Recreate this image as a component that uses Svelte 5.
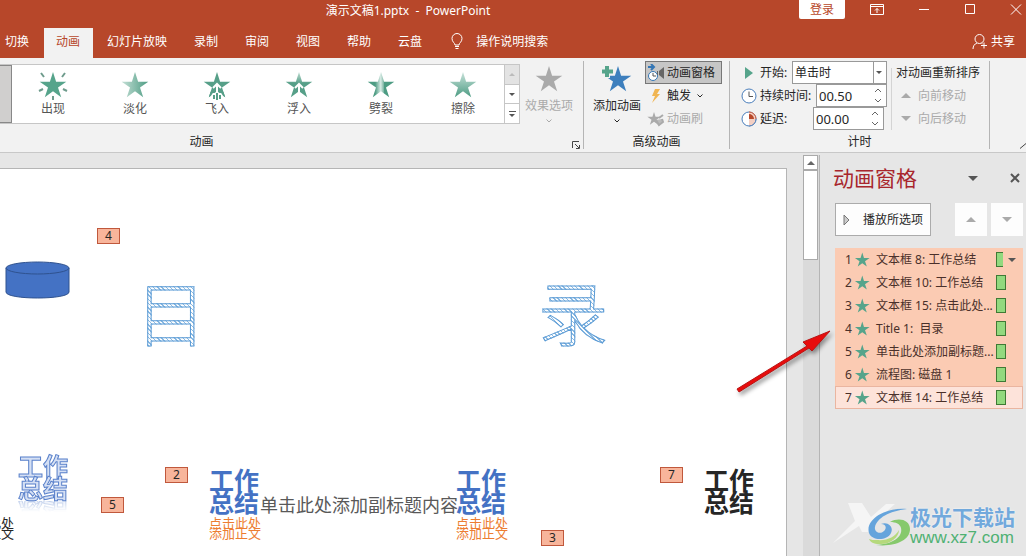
<script lang="ts">
	const star =
		"0,-14 3.1,-4.3 13.3,-4.3 5,1.6 8.2,11.3 0,5.3 -8.2,11.3 -5,1.6 -13.3,-4.3 -3.1,-4.3";

	const tabs = ["切换", "动画", "幻灯片放映", "录制", "审阅", "视图", "帮助", "云盘"];
	let activeTab = "动画";

	const effects = [
		{ id: "appear", name: "出现" },
		{ id: "fade", name: "淡化" },
		{ id: "fly", name: "飞入" },
		{ id: "float", name: "浮入" },
		{ id: "split", name: "劈裂" },
		{ id: "wipe", name: "擦除" },
	];

	const animations = [
		"文本框 8: 工作总结",
		"文本框 10: 工作总结",
		"文本框 15: 点击此处...",
		"Title 1:  目录",
		"单击此处添加副标题...",
		"流程图: 磁盘 1",
		"文本框 14: 工作总结",
	];
	let selected = 6;

	const markers = [
		{ n: 4, x: 97, y: 59 },
		{ n: 2, x: 165, y: 298 },
		{ n: 5, x: 101, y: 328 },
		{ n: 7, x: 660, y: 298 },
		{ n: 3, x: 541, y: 361 },
	];

	let start = "单击时";
	let duration = "00.50";
	let delay = "00.00";
	let showPane = true;

	function step(value: string, by: number) {
		return Math.max(0, Number(value) + by).toFixed(2).padStart(5, "0");
	}
</script>

<div class="window">
	<header>
		<div class="titlebar">
			<h1>演示文稿1.pptx&nbsp; -&nbsp; PowerPoint</h1>
			<button class="login">登录</button>
			<div class="controls">
				<button aria-label="功能区显示选项">
					<svg width="14" height="11" viewBox="0 0 14 11"><path d="M.5.5h13v10H.5zM.5 2.5h13M7 9V4.500M5 6.500l2-2 2 2" /></svg>
				</button>
				<button aria-label="最小化">
					<svg width="12" height="11" viewBox="0 0 12 11"><path d="M1 5.500h10" /></svg>
				</button>
				<button aria-label="最大化">
					<svg width="12" height="11" viewBox="0 0 12 11"><path d="M1.500.5h9v9h-9z" /></svg>
				</button>
				<button aria-label="关闭">
					<svg width="12" height="11" viewBox="0 0 12 11"><path d="M1 .5l10 10M11 .5l-10 10" /></svg>
				</button>
			</div>
		</div>
		<nav>
			{#each tabs as tab}
				<button class="tab" class:active={tab === activeTab} on:click={() => (activeTab = tab)}>{tab}</button>
			{/each}
			<button class="tell">
				<svg width="12" height="17" viewBox="0 0 12 17"><path d="M4 12c0-2-3-3-3-6.500a5 5 0 0 1 10 0C11 9 8 10 8 12zM4 13.500h4M4.500 15.500h3" /></svg>
				操作说明搜索
			</button>
			<button class="share">
				<svg width="16" height="17" viewBox="0 0 16 17"><circle cx="7.500" cy="6" r="4.500" /><path d="M1 16c0-3 1.500-5 4-6M9.500 10l1 .8M12 9.500v6M9 12.500h6" /></svg>
				共享
			</button>
		</nav>
	</header>

	<section class="ribbon">
		<div class="group animation">
			<div class="body">
				<div class="gallery">
					<div class="none"></div>
					{#each effects as effect}
						<button class="effect">
							<svg width="32" height="32" viewBox="-16 -16 32 32">
								<defs>
									<linearGradient id="g-appear"><stop stop-color="#56a48b" /></linearGradient>
									<linearGradient id="g-fade"><stop offset=".1" stop-color="#b8d8cd" /><stop offset="1" stop-color="#4d9c83" /></linearGradient>
									<linearGradient id="g-fly"><stop stop-color="#569f88" /></linearGradient>
									<linearGradient id="g-float" x2="0" y2="1"><stop stop-color="#c0ddd3" /><stop offset=".45" stop-color="#569f88" /></linearGradient>
									<linearGradient id="g-split"><stop offset=".28" stop-color="#4d9c83" /><stop offset=".49" stop-color="#d8ebe5" /><stop offset=".6" stop-color="#7eb7a5" /><stop offset=".62" stop-color="#4d9c83" /></linearGradient>
									<linearGradient id="g-wipe" x2="0" y2="1"><stop stop-color="#c8e2da" /><stop offset="1" stop-color="#4d9c83" /></linearGradient>
								</defs>
								<polygon points={star} fill="url(#g-{effect.id})" />
								{#if effect.id === "appear"}
									<path d="M-12-13l3 4M12-13l-3 4M-14 5l4-2M14 5l-4-2M0 10v4" stroke="#6e9b8c" stroke-width="2" />
								{:else if effect.id === "fly"}
									<path d="M0 8V-2M-4 2l4-4 4 4" stroke="#fff" stroke-width="2" fill="none" />
									<path d="M-6 7h12v8H-6z" fill="#fff" />
									<path d="M0 7v7M-3 9v4M3 9v4" stroke="#569f88" stroke-width="2" />
									<path d="M-8.200 11.300L-6.500 6l3-2v2L-6 9.800zM8.200 11.300L6.500 6l-3-2v2L6 9.800z" fill="#569f88" />
								{:else if effect.id === "float"}
									<path d="M0 6V-2M-4 2l4-4 4 4" stroke="#fff" stroke-width="2" fill="none" />
								{/if}
							</svg>
							{effect.name}
						</button>
					{/each}
					<div class="scroll">
						<button disabled aria-label="上一行"><i class="up"></i></button>
						<button aria-label="下一行"><i class="down"></i></button>
						<button aria-label="其他" class="more"><i class="down"></i></button>
					</div>
				</div>
				<button class="big" disabled>
					<svg width="32" height="34" viewBox="-16 -17 32 34"><polygon points={star} fill="#aaa" /></svg>
					效果选项
					<svg class="chev" width="6" height="4" viewBox="0 0 6 4"><path d="M.5.5L3 3 5.500.5" /></svg>
				</button>
			</div>
			<footer>动画</footer>
			<button class="launcher" aria-label="显示其他效果选项">
				<svg width="8" height="8" viewBox="0 0 8 8"><path d="M.5 7V.5H7M3 3l4 4M7.500 4v3.500H4" /></svg>
			</button>
		</div>

		<div class="group advanced">
			<div class="body">
				<button class="big">
					<svg width="34" height="34" viewBox="-18 -17 34 34">
						<polygon points={star} fill="#3d7fbd" />
						<path d="M-11-15v13M-17-8.500h13" stroke="#f2f2f2" stroke-width="6" />
						<path d="M-11-14v11M-16-8.500h11" stroke="#56a48b" stroke-width="4" />
					</svg>
					添加动画
					<svg class="chev" width="6" height="4" viewBox="0 0 6 4"><path d="M.5.5L3 3 5.500.5" /></svg>
				</button>
				<div class="stack">
					<button class="row" class:pressed={showPane} on:click={() => (showPane = !showPane)}>
						<svg width="18" height="18" viewBox="0 0 18 18">
							<path d="M1 3h6M4 0l3 3-3 3" fill="none" stroke="#3476b5" stroke-width="2" />
							<circle cx="6" cy="12" r="4.500" fill="#fff" stroke="#3476b5" />
							<path d="M6 9v3h3" fill="none" stroke="#555" />
							<path d="M17 3v12l-5-4V7zM10 7h1v4h-1z" fill="#666" />
						</svg>
						动画窗格
					</button>
					<button class="row">
						<svg width="18" height="18" viewBox="0 0 18 18"><path d="M8 2h5l-3 5h3l-8 9 3-7H5z" fill="#f0b552" /></svg>
						触发
						<svg class="chev" width="6" height="4" viewBox="0 0 6 4"><path d="M.5.5L3 3 5.500.5" /></svg>
					</button>
					<button class="row" disabled>
						<svg width="18" height="18" viewBox="0 0 18 18">
							<g transform="translate(7 9) scale(.5)"><polygon points={star} fill="#aaa" /></g>
							<path d="M9 10l3 5 4-3-1-3M12 8l4-3" fill="#bbb" stroke="#aaa" stroke-width="2" />
						</svg>
						动画刷
					</button>
				</div>
			</div>
			<footer>高级动画</footer>
		</div>

		<div class="group timing">
			<div class="body">
				<div class="fields">
					<div class="field">
						<svg width="16" height="16" viewBox="0 0 16 16"><path d="M4 2l8 6-8 6z" fill="#56a48b" /></svg>
						<label for="start">开始:</label>
						<div class="select">
							<select id="start" bind:value={start}>
								<option>单击时</option>
								<option>与上一动画同时</option>
								<option>上一动画之后</option>
							</select>
							<i class="down"></i>
						</div>
					</div>
					<div class="field">
						<svg width="16" height="16" viewBox="0 0 16 16"><circle cx="8" cy="8" r="7" fill="#fff" stroke="#4a7ebb" /><path d="M8 3.500V8.500h4" fill="none" stroke="#555" /></svg>
						<label for="duration">持续时间:</label>
						<div class="spin">
							<input id="duration" bind:value={duration} />
							<div>
								<button aria-label="增加持续时间" on:click={() => (duration = step(duration, 0.25))}><svg width="8" height="5" viewBox="0 0 8 5"><path d="M1 4l3-3 3 3" /></svg></button>
								<button aria-label="减少持续时间" on:click={() => (duration = step(duration, -0.25))}><svg width="8" height="5" viewBox="0 0 8 5"><path d="M1 1l3 3 3-3" /></svg></button>
							</div>
						</div>
					</div>
					<div class="field">
						<svg width="16" height="16" viewBox="0 0 16 16"><circle cx="8" cy="8" r="7" fill="#fff" stroke="#4a7ebb" /><path d="M8 8V1a7 7 0 0 1 0 14" fill="#f3cfc3" /><path d="M8 3v5h5a5 5 0 0 0-5-5z" fill="#b7472a" /><path d="M8 1a7 7 0 0 1 7 7" fill="none" stroke="#c9573a" /><path d="M15 8a7 7 0 0 1-7 7" fill="none" stroke="#4a7ebb" /></svg>
						<label for="delay">延迟:</label>
						<div class="spin delay">
							<input id="delay" bind:value={delay} />
							<div>
								<button aria-label="增加延迟" on:click={() => (delay = step(delay, 0.25))}><svg width="8" height="5" viewBox="0 0 8 5"><path d="M1 4l3-3 3 3" /></svg></button>
								<button aria-label="减少延迟" on:click={() => (delay = step(delay, -0.25))}><svg width="8" height="5" viewBox="0 0 8 5"><path d="M1 1l3 3 3-3" /></svg></button>
							</div>
						</div>
					</div>
				</div>
				<div class="reorder">
					<span>对动画重新排序</span>
					<button disabled><i class="up"></i>向前移动</button>
					<button disabled><i class="down"></i>向后移动</button>
				</div>
			</div>
			<footer>计时</footer>
		</div>
		<button class="collapse" aria-label="折叠功能区">
			<svg width="7" height="6" viewBox="0 0 7 6"><path d="M1 5.500l6-5" /></svg>
		</button>
	</section>

	<main>
		<div class="slide">
			<svg class="disk" width="65" height="39" viewBox="0 0 65 39">
				<path d="M1 7v24c0 8 63 8 63 0V7" fill="#4472c4" stroke="#2f528f" />
				<ellipse cx="32.500" cy="7" rx="31.500" ry="6" fill="#4472c4" stroke="#2f528f" />
			</svg>
			<span class="hatched mu">目</span>
			<span class="hatched lu">录</span>
			{#each markers as m}
				<span class="marker" style="left: {m.x}px; top: {m.y}px">{m.n}</span>
			{/each}
			<p class="word outline">工作<br />总结</p>
			<p class="word blue first">工作<br />总结</p>
			<p class="word blue second">工作<br />总结</p>
			<p class="word black">工作<br />总结</p>
			<p class="subtitle">单击此处添加副标题内容</p>
			<p class="caption dark">点击此处<br />添加正文</p>
			<p class="caption first">点击此处<br />添加正文</p>
			<p class="caption second">点击此处<br />添加正文</p>
		</div>
		<div class="scrollbar">
			<button aria-label="向上滚动"><i class="up"></i></button>
			<div class="thumb"></div>
		</div>

		{#if showPane}
			<aside>
				<div class="head">
					<h2>动画窗格</h2>
					<button aria-label="任务窗格选项"><i class="down"></i></button>
					<button aria-label="关闭窗格" on:click={() => (showPane = false)}>
						<svg width="10" height="10" viewBox="0 0 10 10"><path d="M1 1l8 8M9 1L1 9" /></svg>
					</button>
				</div>
				<div class="tools">
					<button class="play">
						<svg width="8" height="12" viewBox="0 0 8 12"><path d="M1 1l5 5-5 5z" /></svg>
						播放所选项
					</button>
					<button class="move" disabled aria-label="上移"><i class="up"></i></button>
					<button class="move" disabled aria-label="下移"><i class="down"></i></button>
				</div>
				<ol>
					{#each animations as name, i}
						<li class:selected={i === selected}>
							<button on:click={() => (selected = i)}>
								<span class="num">{i + 1}</span>
								<svg width="16" height="16" viewBox="-15 -15 29 29"><polygon points={star} fill="#56a48b" /></svg>
								<span class="name">{name}</span>
								<span class="bar" class:half={i === 0}></span>
								{#if i === 0}<i class="down"></i>{/if}
							</button>
						</li>
					{/each}
				</ol>
			</aside>
		{/if}

		<svg class="arrow" width="110" height="80" viewBox="0 0 110 80">
			<path d="M9 64L79 21 75 17 102 6 84 26 81 23 11 67z" fill="#e80c0c" stroke="#b81414" />
		</svg>

		<div class="watermark">
			<svg width="84" height="50" viewBox="0 0 84 50">
				<path d="M17 1h14l9 14L55 2h9L43 21l-3 9h-9l-3-6L2 41l22-22z" fill="#f5f5f5" />
				<path d="M76 7C54 5 34 18 38 31c3 8 18 8 22 0 3-6-3-12-10-9 5 0 6 4 3 7-4 4-10 1-9-4 2-9 14-16 32-18z" fill="#65a4dc" />
				<path d="M59 20c9-5 20-2 20 7 0 12-16 18-34 16 17-1 27-8 25-17-1-4-5-6-11-6z" fill="#86c96c" />
				<path d="M46 38c10 1 18-3 22-10 0 8-10 15-20 14-5 0-9-2-10-5 2 1 5 1 8 1z" fill="#b5d97c" />
			</svg>
			<div>
				<strong>极光下载站</strong>
				<span>www.xz7.com</span>
			</div>
		</div>
	</main>
</div>

<style>
	:global(body) {
		background: #e6e6e6;
	}

	.window {
		display: flex;
		flex-direction: column;
		min-height: 100vh;
		overflow: hidden;
		font: 12px/18px "Noto Sans", "Noto Sans CJK SC", sans-serif;
		color: #262626;
	}

	.window * {
		box-sizing: border-box;
	}

	button,
	input,
	select {
		font: inherit;
		color: inherit;
		border: 0;
		padding: 0;
		margin: 0;
		background: none;
		border-radius: 0;
		white-space: nowrap;
	}

	h1,
	h2,
	p,
	ol {
		margin: 0;
		padding: 0;
		font-weight: normal;
	}

	svg {
		display: block;
		flex: none;
	}

	.up,
	.down {
		width: 0;
		height: 0;
		border: 4px solid transparent;
		border-top: 0;
		border-bottom: 4px solid #666;
	}

	.down {
		border-top: 4px solid #555;
		border-bottom: 0;
	}

	.chev path {
		fill: none;
		stroke: currentColor;
	}

	header {
		background: #b7472a;
		color: #fff;
	}

	header svg {
		fill: none;
		stroke: #fff;
	}

	.titlebar {
		display: flex;
		height: 28px;
	}

	h1 {
		flex: 1;
		font-size: 12px;
		line-height: 22px;
		text-align: center;
		padding-left: 17px;
	}

	.login {
		width: 46px;
		height: 19px;
		background: #fff;
		color: #b7472a;
		border-radius: 0 0 2px 2px;
	}

	.controls {
		display: flex;
		width: 181px;
		height: 18px;
		justify-content: space-between;
		padding: 0 4px 0 25px;
	}

	nav {
		display: flex;
		height: 30px;
	}

	.tab {
		padding: 0 13px 3px 14px;
	}

	.tab:first-child {
		padding: 0 15px 3px 5px;
	}

	.tab.active {
		background: #f2f2f2;
		color: #b7472a;
		padding: 0 13px 3px 12px;
	}

	.tell,
	.share {
		display: flex;
		align-items: center;
		gap: 13px;
		padding: 0 0 3px 16px;
	}

	.share {
		margin-left: auto;
		gap: 3px;
		padding-right: 11px;
	}

	.ribbon {
		display: flex;
		height: 95px;
		background: #f2f2f2;
		border-bottom: 1px solid #c8c8c8;
		padding: 3px 0;
	}

	.group {
		position: relative;
		display: flex;
		flex-direction: column;
		justify-content: space-between;
		border-right: 1px solid #b5b5b5;
	}

	.group .body {
		display: flex;
	}

	footer {
		text-align: center;
		line-height: 14px;
	}

	.animation {
		width: 584px;
	}

	.animation footer {
		padding-right: 180px;
	}

	.gallery {
		display: flex;
		height: 60px;
		margin-top: 3px;
		background: #fff;
		border: 1px solid #c6c6c6;
		border-left: 0;
	}

	.none {
		width: 12px;
		background: #d0cfce;
		border: 1px solid #888;
		border-left: 0;
	}

	.effect {
		display: flex;
		flex-direction: column;
		align-items: center;
		width: 82px;
		padding-top: 5px;
		line-height: 14px;
		color: #555;
	}

	.scroll {
		display: flex;
		flex-direction: column;
		width: 15px;
		border-left: 1px solid #c6c6c6;
	}

	.scroll button {
		display: flex;
		flex: 1;
		align-items: center;
		justify-content: center;
		border-bottom: 1px solid #c6c6c6;
	}

	.scroll button:disabled {
		background: #e3e3e3;
	}

	.scroll button:last-child {
		border-bottom: 0;
	}

	.scroll i {
		border-left-width: 3px;
		border-right-width: 3px;
		border-top-width: 3px;
	}

	.scroll .up {
		border-top-width: 0;
		border-bottom-width: 3px;
		border-bottom-color: #bbb;
	}

	.scroll .more {
		flex-direction: column;
		gap: 2px;
	}

	.more::before {
		content: "";
		width: 7px;
		height: 1px;
		background: #555;
	}

	.big {
		display: flex;
		flex-direction: column;
		align-items: center;
		width: 58px;
		padding-top: 2px;
	}

	.big .chev {
		margin-top: 4px;
	}

	button:disabled {
		color: #aaa;
	}

	.launcher {
		position: absolute;
		right: 3px;
		bottom: 0;
	}

	.launcher path,
	.collapse path {
		fill: none;
		stroke: #444;
	}

	.advanced {
		width: 146px;
	}

	.advanced .big {
		width: 61px;
		padding-left: 5px;
	}

	.stack {
		display: flex;
		flex-direction: column;
		align-items: flex-start;
	}

	.row {
		display: flex;
		align-items: center;
		gap: 2px;
		width: 77px;
		height: 23px;
		border: 1px solid transparent;
		padding-left: 1px;
	}

	.row .chev {
		margin-left: 4px;
	}

	.pressed {
		background: #c6c6c6;
		border-color: #777;
	}

	.timing {
		width: 260px;
	}

	.timing .body {
		padding-left: 11px;
	}

	.fields {
		width: 150px;
	}

	.field {
		display: flex;
		align-items: center;
		height: 23px;
	}

	.field label {
		margin-left: 3px;
		white-space: nowrap;
	}

	.select,
	.spin {
		display: flex;
		align-items: center;
		height: 23px;
		width: 95px;
		margin-left: auto;
		margin-right: 4px;
		background: #fff;
		border: 1px solid #999;
	}

	.select {
		position: relative;
	}

	select {
		width: 100%;
		height: 100%;
		appearance: none;
		padding-left: 2px;
	}

	.select i {
		position: absolute;
		right: 0;
		border-width: 3px 3px 0;
		margin-right: 4px;
		pointer-events: none;
	}

	.select::after {
		content: "";
		position: absolute;
		right: 12px;
		height: 100%;
		border-left: 1px solid #999;
	}

	.spin {
		width: 71px;
	}

	.spin.delay {
		margin-right: 7px;
	}

	.spin input {
		flex: 1;
		min-width: 0;
		padding-left: 2px;
		font-size: 13px;
	}

	.spin div {
		display: flex;
		flex-direction: column;
		gap: 5px;
		padding-right: 4px;
	}

	.spin path {
		fill: none;
		stroke: #666;
	}

	.reorder {
		flex: 1;
		display: flex;
		flex-direction: column;
		margin-top: 7px;
		border-left: 1px solid #d4d4d4;
		padding-left: 4px;
		white-space: nowrap;
	}

	.reorder span {
		line-height: 10px;
		padding-bottom: 6px;
	}

	.reorder button {
		display: flex;
		align-items: center;
		gap: 7px;
		height: 23px;
		padding-left: 5px;
	}

	.reorder i {
		border-width: 0 5px 5px;
		border-bottom-color: #aaa;
	}

	.reorder i.down {
		border-width: 5px 5px 0;
		border-top-color: #aaa;
	}

	.collapse {
		align-self: flex-end;
		margin-left: auto;
	}

	main {
		position: relative;
		display: flex;
		flex: 1;
		min-height: 403px;
	}

	.slide {
		position: relative;
		flex: 1;
		margin: 15px 16px 0 0;
		overflow: hidden;
		background: #fff;
		border: 1px solid #b5b5b5;
		border-width: 1px 1px 0 0;
	}

	.slide > * {
		position: absolute;
		white-space: nowrap;
	}

	.disk {
		left: 5px;
		top: 92px;
	}

	.hatched {
		font: 300 70px/72px "Noto Sans CJK SC", sans-serif;
		color: transparent;
		background: repeating-linear-gradient(45deg, #8bbae2 0 1px, #fff 1px 3px);
		background-clip: text;
		-webkit-text-stroke: 1px #5b9bd5;
	}

	.mu {
		left: 136px;
		top: 106px;
	}

	.lu {
		left: 538px;
		top: 106px;
	}

	.marker {
		width: 23px;
		height: 16px;
		background: #f8b59b;
		border: 1px solid #c0583c;
		line-height: 14px;
		text-align: center;
	}

	.word {
		top: 300px;
		font-size: 25px;
		line-height: 22px;
		font-weight: bold;
	}

	.outline {
		left: 18px;
		top: 286px;
		color: #d5e0f4;
		-webkit-text-stroke: 1px #5b82cb;
		-webkit-box-reflect: below 2px linear-gradient(transparent 75%, rgba(0, 0, 0, 0.4));
	}

	.blue {
		color: #4472c4;
	}

	.black {
		left: 704px;
	}

	.first {
		left: 209px;
	}

	.second {
		left: 456px;
	}

	.subtitle {
		left: 260px;
		top: 324px;
		font-size: 18px;
		line-height: 24px;
		color: #595959;
	}

	.caption {
		top: 349px;
		font-size: 13px;
		line-height: 10px;
		color: #ed7d31;
	}

	.dark {
		left: -38px;
		color: #262626;
	}

	.scrollbar {
		width: 17px;
		margin-top: 2px;
		background: #dadada;
		border-right: 1px solid #b5b5b5;
	}

	.scrollbar button {
		display: flex;
		align-items: center;
		justify-content: center;
		width: 15px;
		height: 15px;
		background: #fff;
		border: 1px solid #aaa;
	}

	.thumb {
		width: 15px;
		height: 90px;
		background: #fff;
		border: 1px solid #aaa;
	}

	aside {
		width: 206px;
		padding: 14px 3px 0 13px;
	}

	.head {
		display: flex;
		align-items: center;
		height: 22px;
	}

	h2 {
		flex: 1;
		font-size: 21px;
		line-height: 22px;
		color: #a8262d;
	}

	.head .down {
		display: block;
		border-width: 5px 5px 0;
	}

	.head svg {
		margin: 0 3px 0 32px;
		stroke: #555;
		stroke-width: 2;
	}

	.tools {
		display: flex;
		gap: 4px;
		margin: 14px 0 12px 2px;
	}

	.play {
		display: flex;
		align-items: center;
		gap: 12px;
		width: 96px;
		height: 33px;
		margin-right: auto;
		padding-left: 7px;
		background: #fdfdfd;
		border: 1px solid #ababab;
	}

	.play path {
		fill: #ccc;
		stroke: #777;
	}

	.move {
		display: flex;
		align-items: center;
		justify-content: center;
		width: 32px;
		background: #fdfdfd;
	}

	.move i {
		border-width: 0 5px 5px;
		border-bottom-color: #aaa;
	}

	.move i.down {
		border-width: 5px 5px 0;
		border-top-color: #aaa;
	}

	ol {
		list-style: none;
		margin-left: 2px;
		background: #fbcbb3;
	}

	li button {
		display: flex;
		align-items: center;
		width: 100%;
		height: 23px;
		padding-left: 10px;
		color: #4a302a;
		white-space: pre;
	}

	li.selected {
		background: #fde3da;
		box-shadow: 0 0 0 1px #eab5a0 inset;
	}

	.num {
		width: 9px;
		text-align: left;
	}

	.name {
		width: 120px;
		padding-left: 6px;
		text-align: left;
	}

	.bar {
		width: 10px;
		height: 15px;
		margin-left: 6px;
		background: #92d97e;
		border: 1px solid #3f7a35;
	}

	.bar.half {
		width: 7px;
		border-right: 0;
		margin-right: 5px;
	}

	.arrow {
		position: absolute;
		right: 188px;
		top: 172px;
		filter: drop-shadow(2px 3px 2px rgba(0, 0, 0, 0.4));
	}

	.watermark {
		position: absolute;
		right: 11px;
		bottom: 4px;
		display: flex;
		align-items: center;
	}

	.watermark svg {
		margin-right: -5px;
	}

	.watermark div {
		display: flex;
		flex-direction: column;
	}

	.watermark strong {
		font-size: 21px;
		line-height: 22px;
		font-weight: bold;
		color: #72a9dc;
		text-shadow: 0 0 2px #fff;
	}

	.watermark span {
		font: 17px/20px "Liberation Sans", sans-serif;
		color: #4fb173;
	}
</style>
